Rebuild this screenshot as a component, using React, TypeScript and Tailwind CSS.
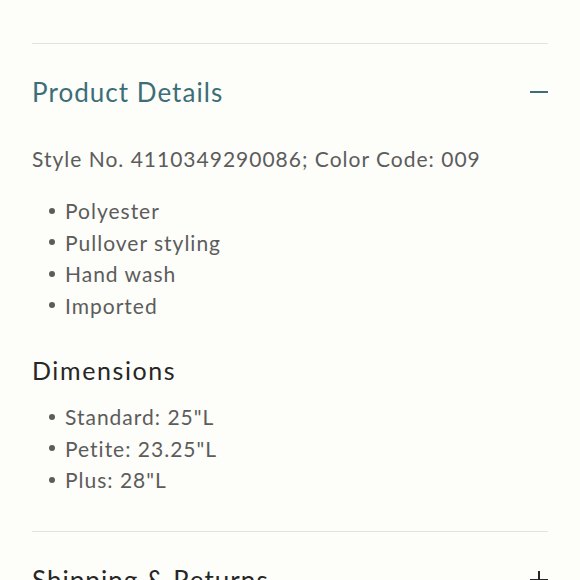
const details = ["Polyester", "Pullover styling", "Hand wash", "Imported"];
const dimensions = ['Standard: 25"L', 'Petite: 23.25"L', 'Plus: 28"L'];

const font = { fontFamily: "Lato, 'Noto Sans', sans-serif" };

function Bullets({ items }: { items: string[] }) {
  return (
    <ul className="flex flex-col pl-[17px] text-[21px] leading-[31.5px] tracking-[1px] text-[#5c5c5c]">
      {items.map((item) => (
        <li key={item} className="flex items-center gap-[10px]">
          <span className="w-[6px] h-[6px] rounded-full bg-[#5c5c5c] shrink-0" />
          <span>{item}</span>
        </li>
      ))}
    </ul>
  );
}

export default function App() {
  return (
    <div className="w-full h-[580px] overflow-hidden bg-[#fdfdf9] px-8" style={font}>
      <div className="h-[43px]" />
      <div className="border-t border-[#e2e2de]" />

      {/* Product Details (open) */}
      <button className="w-full flex items-center justify-between mt-[32px] text-left">
        <span className="text-[26px] leading-[32px] tracking-[0.04em] text-[#3c6e78]">Product Details</span>
        <span className="w-[18px] h-[1.5px] bg-[#3c6e78]" />
      </button>

      <p className="mt-[37px] text-[21px] leading-[28px] tracking-[1px] text-[#5c5c5c]">
        Style No. 4110349290086; Color Code: 009
      </p>

      <div className="mt-[22px]">
        <Bullets items={details} />
      </div>

      <h3 className="mt-[34px] text-[25px] leading-[30px] tracking-[1.6px] text-[#262626]">Dimensions</h3>

      <div className="mt-[16px]">
        <Bullets items={dimensions} />
      </div>

      <div className="mt-[35px] border-t border-[#e2e2de]" />

      {/* Shipping & Returns (closed) */}
      <button className="w-full flex items-center justify-between mt-[32px] text-left">
        <span className="text-[26px] leading-[32px] tracking-[0.04em] text-[#262626]">Shipping &amp; Returns</span>
        <span className="relative w-[18px] h-[18px]">
          <span className="absolute left-0 top-[8px] w-[18px] h-[1.5px] bg-[#262626]" />
          <span className="absolute top-0 left-[8px] h-[18px] w-[1.5px] bg-[#262626]" />
        </span>
      </button>
    </div>
  );
}
